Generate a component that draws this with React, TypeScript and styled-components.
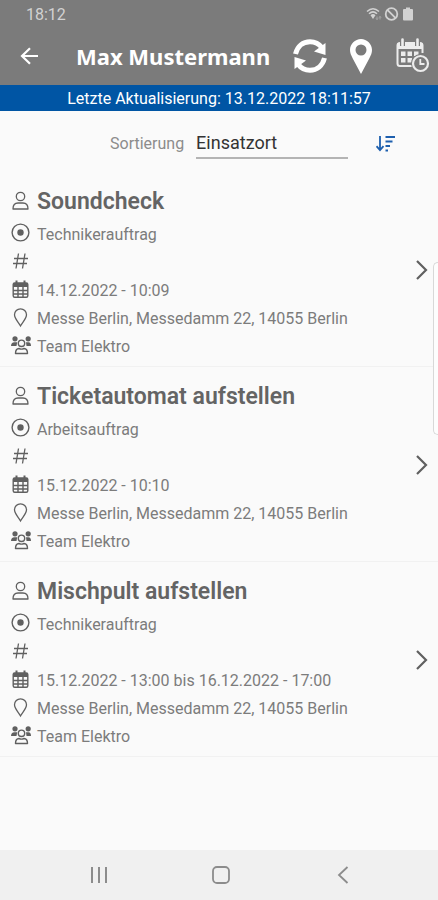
import React from "react";
import styled, { createGlobalStyle } from "styled-components";

const GlobalStyle = createGlobalStyle`
  *, *::before, *::after { box-sizing: border-box; }
  body {
    margin: 0;
    background: #fafafa;
    font-family: Roboto, "Liberation Sans", sans-serif;
    color: #6b6b6b;
  }
`;

const Screen = styled.div`
  position: relative;
  display: flex;
  flex-direction: column;
  min-height: 100vh;
`;

const Header = styled.header`
  background: #7b7b7b;
  color: #ffffff;
`;

const StatusBar = styled.div`
  display: flex;
  align-items: center;
  justify-content: space-between;
  height: 28px;
  padding: 0 23px 0 26px;
  font-size: 16px;
  color: #d2d2d2;
`;

const StatusIcons = styled.div`
  display: flex;
  align-items: center;
  gap: 2px;
`;

const Toolbar = styled.div`
  display: flex;
  align-items: center;
  height: 57px;
  padding: 0 8px 2px 16px;
`;

const IconButton = styled.button`
  display: flex;
  flex: none;
  padding: 0;
  border: 0;
  background: none;
  color: inherit;
  cursor: pointer;
`;

const Title = styled.h1`
  flex: 1;
  margin: 0 0 0 34px;
  font-family: "Noto Sans", "Open Sans", sans-serif;
  font-size: 22px;
  line-height: 32px;
  font-weight: 700;
  white-space: nowrap;
`;

const Actions = styled.div`
  display: flex;
  align-items: center;
  gap: 21px;
`;

const UpdateBanner = styled.div`
  height: 26px;
  padding-top: 2px;
  background: #0055a4;
  color: #ffffff;
  font-size: 16px;
  line-height: 24px;
  text-align: center;
`;

const SortRow = styled.div`
  display: flex;
  align-items: center;
  height: 61px;
  padding: 4px 42px 0 110px;
`;

const SortLabel = styled.label`
  font-size: 16px;
  color: #8c8c8c;
`;

const SortSelect = styled.select`
  flex: 1;
  min-width: 0;
  height: 30px;
  margin: 0 28px 0 12px;
  padding: 0;
  border: 0;
  border-bottom: 2px solid #b4b4b4;
  border-radius: 0;
  background: none;
  appearance: none;
  font-family: inherit;
  font-size: 18px;
  color: #333333;
`;

const OrderList = styled.ul`
  flex: 1;
  margin: 0;
  padding: 0;
  list-style: none;
`;

const OrderLink = styled.a`
  display: flex;
  align-items: center;
  padding: 12px 7px 6px 10px;
  border-bottom: 1px solid #f1f1f1;
  color: inherit;
  text-decoration: none;

  & > svg {
    margin-bottom: 4px;
  }
`;

const OrderBody = styled.div`
  flex: 1;
  min-width: 0;
`;

const Line = styled.div`
  display: flex;
  align-items: center;
  gap: 6px;
  height: 28px;
  font-size: 16px;
  color: #7c7c7c;

  & > svg {
    flex: none;
    color: #606060;
  }
`;

const TitleLine = styled(Line)`
  height: 36px;
`;

const OrderTitle = styled.h2`
  margin: 0;
  font-size: 23px;
  line-height: 32px;
  font-weight: 600;
  color: #646464;
`;

const EdgeHandle = styled.div`
  position: absolute;
  top: 262px;
  right: 0;
  width: 5px;
  height: 173px;
  border: 1px solid #d8d8d8;
  border-right: 0;
  border-radius: 5px 0 0 5px;
  background: #fdfdfd;
`;

const SystemNav = styled.nav`
  display: grid;
  grid-template-columns: repeat(3, 1fr);
  align-items: center;
  justify-items: center;
  height: 50px;
  padding: 0 34px 0 38px;
  background: #f0f0f0;
  color: #8c8c8c;
`;

const WifiIcon = () => (
  <svg width="16" height="14" viewBox="0 0 16 14" fill="none" stroke="currentColor" strokeWidth="1.5">
    <path d="M1 4.5Q7 -1 13 4.5M3 6.8Q7 3 11 6.8" />
    <path d="M4.5 8.2Q7 6 9.5 8.2L7 12z" fill="currentColor" stroke="none" />
    <path d="M11 9.5v3M10 11.5l1 1 1-1M14 12.5v-3M13 10.5l1-1 1 1" strokeWidth="0.7" opacity="0.7" />
  </svg>
);

const BlockedIcon = () => (
  <svg width="15" height="14" viewBox="0 0 15 14" fill="none" stroke="currentColor" strokeWidth="1.8">
    <circle cx="7.5" cy="7" r="5.8" />
    <path d="M3.4 2.9l8.2 8.2" />
  </svg>
);

const BatteryIcon = () => (
  <svg width="14" height="14" viewBox="0 0 14 14" fill="currentColor">
    <path d="M5 .5h4V2h2q1 0 1 1v9.500q0 1-1 1H3q-1 0-1-1V3q0-1 1-1h2z" />
  </svg>
);

const BackArrowIcon = () => (
  <svg width="26" height="24" viewBox="0 0 26 24" fill="none" stroke="currentColor" strokeWidth="2.2">
    <path d="M22 12H6M14 4.2L6 12l8 7.8" />
  </svg>
);

const RefreshIcon = () => (
  <svg width="36" height="36" viewBox="0 0 36 36" fill="none" stroke="currentColor" strokeWidth="5">
    <path d="M3.5 16C5.5 8 11 3.8 18 3.8c5 0 9 2 12 6" />
    <path d="M32.5 20C30.5 28 25 32.200 18 32.200c-5 0-9-2-12-6" />
    <path d="M33.500 5v12L22 13.500z" fill="currentColor" stroke="none" />
    <path d="M2.500 31V19L14 22.500z" fill="currentColor" stroke="none" />
  </svg>
);

const PinSolidIcon = () => (
  <svg width="24" height="36" viewBox="0 0 24 36" fill="currentColor" fillRule="evenodd">
    <path d="M12 1C6 1 1 6 1 12c0 3 1 5 3 9l8 15 8-15c2-4 3-6 3-9C23 6 18 1 12 1zm0 5.500a5.500 5.500 0 1 1 0 11 5.500 5.500 0 0 1 0-11z" />
  </svg>
);

const CalendarClockIcon = () => (
  <svg width="36" height="36" viewBox="0 0 36 36" fill="none" stroke="#ececec" strokeWidth="2">
    <path d="M18 28H6q-2.500 0-2.500-2.500V7.500Q3.500 5 6 5h20q2.500 0 2.500 2.500V15" />
    <path d="M3.500 5h25v6h-25z" fill="#ececec" stroke="none" />
    <path d="M8.500 2v6M23.500 2v6" stroke="#7b7b7b" strokeWidth="5" />
    <path d="M8.500 1.500v6M23.500 1.500v6" strokeWidth="2.6" strokeLinecap="round" />
    <path d="M7 13.500h4.500V18H7zM13.500 13.500H18V18h-4.500zM20 13.500h4.500V18H20zM7 20h4.500v4.500H7zM13.500 20H18v4.500h-4.500z" fill="#ececec" stroke="none" />
    <circle cx="26.500" cy="25.500" r="9.500" fill="#7b7b7b" stroke="none" />
    <circle cx="26.500" cy="25.500" r="7.500" strokeWidth="2.2" />
    <path d="M26.300 21v5H30.500" strokeWidth="1.800" />
  </svg>
);

const SortIcon = () => (
  <svg width="20" height="20" viewBox="0 0 20 20" fill="none" stroke="#1d5fae" strokeWidth="1.8">
    <path d="M4 2v14M.5 12.200l3.500 4 3.500-4" />
    <path d="M9.500 3H19M9.500 7.500h7M9.500 12H14M9.500 16.500H12" />
  </svg>
);

const PersonIcon = () => (
  <svg width="21" height="22" viewBox="0 0 21 22" fill="none" stroke="currentColor" strokeWidth="1.3">
    <circle cx="10.500" cy="5.500" r="4.200" />
    <path d="M3 18q0-6 5-6h5q5 0 5 6z" strokeLinejoin="round" />
  </svg>
);

const TargetIcon = () => (
  <svg width="21" height="22" viewBox="0 0 21 22" fill="none" stroke="currentColor" strokeWidth="1.4">
    <circle cx="10.500" cy="9.500" r="8.400" />
    <circle cx="10.500" cy="9.500" r="3.200" fill="currentColor" stroke="none" />
  </svg>
);

const HashIcon = () => (
  <svg width="21" height="22" viewBox="0 0 21 22" fill="none" stroke="currentColor" strokeWidth="1.3">
    <path d="M8.500 2.500L6 17.500M15 2.500L12.500 17.500M4 7.500h14M3 12.500h14" />
  </svg>
);

const CalendarIcon = () => (
  <svg width="21" height="22" viewBox="0 0 21 22" fill="none" stroke="currentColor" strokeWidth="1.4">
    <rect x="3.200" y="4" width="14.600" height="14.300" rx="1.500" />
    <path d="M3 4h15v4H3z" fill="currentColor" stroke="none" />
    <path d="M6.500 1.500v3M14.500 1.500v3" strokeWidth="2" />
    <path d="M3 11.500h15M3 15h15M8 8v10M13 8v10" />
  </svg>
);

const PinIcon = () => (
  <svg width="21" height="22" viewBox="0 0 21 22" fill="none" stroke="currentColor" strokeWidth="1.3">
    <path d="M10.500 19C8 14.500 4.500 11.500 4.500 7.800a6 6 0 0 1 12 0c0 3.700-3.500 6.700-6 11.200z" />
  </svg>
);

const TeamIcon = () => (
  <svg width="21" height="22" viewBox="0 0 21 22" fill="none" stroke="currentColor" strokeWidth="1.4">
    <g fill="currentColor" stroke="none">
      <circle cx="5" cy="3.800" r="2.600" />
      <circle cx="18.200" cy="3.800" r="2.600" />
      <path d="M1 11q0-3.800 3.500-3.800h2.700L6.500 11zM21 11q0-3.800-2.500-3.800h-2.500l.5 3.800z" />
    </g>
    <circle cx="11.500" cy="8.300" r="3.200" />
    <path d="M5.500 18.500q0-4.800 3.500-5 2.500 1.200 5 0 3.500.2 3.500 5z" strokeLinejoin="round" />
  </svg>
);

const ChevronRightIcon = () => (
  <svg width="20" height="24" viewBox="0 0 20 24" fill="none" stroke="#606060" strokeWidth="2.2">
    <path d="M6 3l9 9-9 9" />
  </svg>
);

const RecentsIcon = () => (
  <svg width="20" height="20" viewBox="0 0 20 20" fill="none" stroke="currentColor" strokeWidth="2">
    <path d="M3 2v16M10 2v16M17 2v16" />
  </svg>
);

const HomeIcon = () => (
  <svg width="20" height="20" viewBox="0 0 20 20" fill="none" stroke="currentColor" strokeWidth="1.8">
    <rect x="2" y="2" width="16" height="16" rx="4" />
  </svg>
);

const NavBackIcon = () => (
  <svg width="20" height="20" viewBox="0 0 20 20" fill="none" stroke="currentColor" strokeWidth="1.8">
    <path d="M14.500 2L6 10l8.500 8" />
  </svg>
);

interface Order {
  title: string;
  kind: string;
  date: string;
  place: string;
  team: string;
}

const orders: Order[] = [
  {
    title: "Soundcheck",
    kind: "Technikerauftrag",
    date: "14.12.2022 - 10:09",
    place: "Messe Berlin, Messedamm 22, 14055 Berlin",
    team: "Team Elektro",
  },
  {
    title: "Ticketautomat aufstellen",
    kind: "Arbeitsauftrag",
    date: "15.12.2022 - 10:10",
    place: "Messe Berlin, Messedamm 22, 14055 Berlin",
    team: "Team Elektro",
  },
  {
    title: "Mischpult aufstellen",
    kind: "Technikerauftrag",
    date: "15.12.2022 - 13:00 bis 16.12.2022 - 17:00",
    place: "Messe Berlin, Messedamm 22, 14055 Berlin",
    team: "Team Elektro",
  },
];

const OrderItem = ({ order }: { order: Order }) => (
  <li>
    <OrderLink href="#">
      <OrderBody>
        <TitleLine>
          <PersonIcon />
          <OrderTitle>{order.title}</OrderTitle>
        </TitleLine>
        <Line><TargetIcon />{order.kind}</Line>
        <Line><HashIcon /></Line>
        <Line><CalendarIcon />{order.date}</Line>
        <Line><PinIcon />{order.place}</Line>
        <Line><TeamIcon />{order.team}</Line>
      </OrderBody>
      <ChevronRightIcon />
    </OrderLink>
  </li>
);

export default function App() {
  return (
    <Screen>
      <GlobalStyle />
      <Header>
        <StatusBar>
          <span>18:12</span>
          <StatusIcons>
            <WifiIcon />
            <BlockedIcon />
            <BatteryIcon />
          </StatusIcons>
        </StatusBar>
        <Toolbar>
          <IconButton aria-label="Zurück"><BackArrowIcon /></IconButton>
          <Title>Max Mustermann</Title>
          <Actions>
            <IconButton aria-label="Aktualisieren"><RefreshIcon /></IconButton>
            <IconButton aria-label="Karte"><PinSolidIcon /></IconButton>
            <IconButton aria-label="Kalender"><CalendarClockIcon /></IconButton>
          </Actions>
        </Toolbar>
      </Header>
      <UpdateBanner>Letzte Aktualisierung: 13.12.2022 18:11:57</UpdateBanner>
      <SortRow>
        <SortLabel htmlFor="sort">Sortierung</SortLabel>
        <SortSelect id="sort" defaultValue="Einsatzort">
          <option>Einsatzort</option>
        </SortSelect>
        <IconButton aria-label="Sortierrichtung"><SortIcon /></IconButton>
      </SortRow>
      <OrderList>
        {orders.map((order) => (
          <OrderItem key={order.title} order={order} />
        ))}
      </OrderList>
      <EdgeHandle />
      <SystemNav>
        <IconButton aria-label="Letzte Apps"><RecentsIcon /></IconButton>
        <IconButton aria-label="Startbildschirm"><HomeIcon /></IconButton>
        <IconButton aria-label="Zurück"><NavBackIcon /></IconButton>
      </SystemNav>
    </Screen>
  );
}
